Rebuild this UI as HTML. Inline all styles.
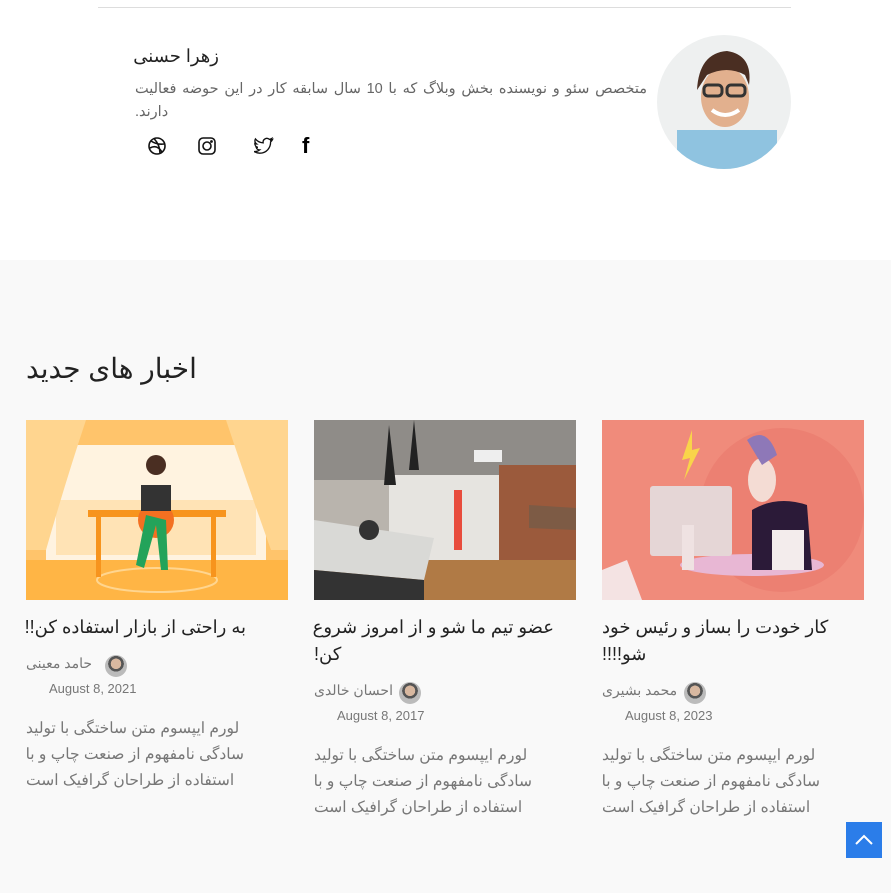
<!DOCTYPE html>
<html><head><meta charset="utf-8"><style>
*{margin:0;padding:0;box-sizing:border-box}
body{width:891px;height:893px;overflow:hidden;background:#fff;font-family:"Liberation Sans","Noto Sans CJK SC",sans-serif;position:relative;color:#222}
.abs{position:absolute}
.r{direction:rtl;white-space:nowrap;text-align:left}
.gray{position:absolute;left:0;top:260px;width:891px;height:633px;background:#f9f9f9}
.t{font-size:18px;color:#222;line-height:27px}
.ex{font-size:15.5px;color:#777;line-height:26px}
.meta{font-size:13px;color:#777}
.nm{font-size:14px;color:#777}
.av{width:22px;height:22px;border-radius:50%;background:radial-gradient(circle at 50% 40%,#d8b8a0 0 30%,#555 31% 45%,#bbb 46%)}
</style></head><body>
<div class="abs" style="left:98px;top:7px;width:693px;height:1px;background:#ddd"></div>
<div class="abs" style="left:657px;top:35px;width:134px;height:134px;border-radius:50%;overflow:hidden;background:#eef0f0">
<svg width="134" height="134"><rect x="20" y="95" width="100" height="50" fill="#8fc3e0"/><ellipse cx="68" cy="62" rx="24" ry="30" fill="#e2b08e"/><path d="M40 55 Q42 18 70 16 Q96 20 92 50 L88 40 Q70 30 50 40Z" fill="#4a2e22"/><rect x="47" y="50" width="18" height="11" rx="4" fill="none" stroke="#333" stroke-width="3"/><rect x="70" y="50" width="18" height="11" rx="4" fill="none" stroke="#333" stroke-width="3"/><path d="M55 75 Q68 85 82 75" stroke="#fff" stroke-width="4" fill="none"/></svg></div>
<div class="abs r" style="left:135px;top:46px;width:84px;font-size:18px;color:#222">زهرا حسنی</div>
<div class="abs r" style="left:135px;top:78px;width:512px;font-size:14.5px;color:#666;line-height:23px;white-space:normal;text-align:justify;text-align-last:left">متخصص سئو و نویسنده بخش وبلاگ که با 10 سال سابقه کار در این حوضه فعالیت دارند.</div>
<svg class="abs" style="left:147px;top:136px" width="20" height="20" viewBox="0 0 20 20" fill="none" stroke="#111" stroke-width="1.6"><circle cx="10" cy="10" r="8"/><path d="M4 5 Q10 9 17 8M3 12 Q10 8 15 16M7 2.5 Q13 9 13 17.5"/></svg>
<svg class="abs" style="left:197px;top:136px" width="20" height="20" viewBox="0 0 20 20" fill="none" stroke="#111" stroke-width="1.6"><rect x="2" y="2" width="16" height="16" rx="4"/><circle cx="10" cy="10" r="4"/><circle cx="14.5" cy="5.5" r=".6" fill="#111"/></svg>
<svg class="abs" style="left:254px;top:137px" width="20" height="18" viewBox="0 0 24 20" fill="none" stroke="#111" stroke-width="1.6"><path d="M22 2.5a9 9 0 0 1-2.6.8A4.5 4.5 0 0 0 21.4 1a9 9 0 0 1-2.9 1.1A4.5 4.5 0 0 0 11 6.2 12.8 12.8 0 0 1 1.7 1.5a4.5 4.5 0 0 0 1.4 6A4.4 4.4 0 0 1 1 7v.1a4.5 4.5 0 0 0 3.6 4.4 4.5 4.5 0 0 1-2 .1 4.5 4.5 0 0 0 4.2 3.1A9 9 0 0 1 0 16.6 12.8 12.8 0 0 0 7 18.6c8.3 0 12.9-6.9 12.9-12.9v-.6A9 9 0 0 0 22 2.5z"/></svg>
<div class="abs" style="left:302px;top:133px;font-size:22px;font-weight:bold;color:#000;font-family:'Liberation Sans'">f</div>
<div class="gray"></div>
<div class="abs r" style="left:26px;top:352px;font-size:28px;color:#222">اخبار های جدید</div>
<svg class="abs" style="left:26px;top:420px" width="262" height="180"><rect width="262" height="180" fill="#ffc46b"/><rect x="20" y="25" width="220" height="120" fill="#fff3e0"/><rect x="30" y="80" width="200" height="55" fill="#ffe3b5"/><path d="M0 0 H60 Q40 60 20 130 H0Z" fill="#ffd58f"/><path d="M262 0 H200 Q220 60 245 130 H262Z" fill="#ffd58f"/><rect y="140" width="262" height="40" fill="#ffb545"/><ellipse cx="131" cy="160" rx="60" ry="12" fill="none" stroke="#ffd58f" stroke-width="2"/><rect x="62" y="90" width="138" height="7" fill="#f7941d"/><rect x="70" y="97" width="5" height="60" fill="#f7941d"/><rect x="185" y="97" width="5" height="60" fill="#f7941d"/><circle cx="130" cy="100" r="18" fill="#f37021"/><rect x="115" y="65" width="30" height="26" fill="#333"/><path d="M120 95 L110 145 L118 148 L130 105 L135 150 L142 150 L140 100Z" fill="#23a35a"/><circle cx="130" cy="45" r="10" fill="#4a2e22"/></svg>
<svg class="abs" style="left:314px;top:420px" width="262" height="180"><rect width="262" height="180" fill="#b9b4ad"/><rect width="262" height="60" fill="#8f8c88"/><rect x="75" y="55" width="115" height="100" fill="#e6e4e0"/><rect x="185" y="45" width="77" height="110" fill="#9b5a3c"/><rect y="140" width="262" height="40" fill="#b07a45"/><path d="M0 100 L120 118 L110 160 L0 150Z" fill="#d9d9d6"/><path d="M0 150 L110 160 L110 180 L0 180Z" fill="#333"/><path d="M215 85 L262 88 V110 L215 108Z" fill="#7d5b45"/><path d="M75 5 L70 65 L82 65Z" fill="#222"/><path d="M100 0 L95 50 L105 50Z" fill="#222"/><rect x="160" y="30" width="28" height="12" fill="#eee"/><circle cx="55" cy="110" r="10" fill="#333"/><rect x="140" y="70" width="8" height="60" fill="#e84c3d"/></svg>
<svg class="abs" style="left:602px;top:420px" width="262" height="180"><rect width="262" height="180" fill="#f08b7b"/><circle cx="180" cy="90" r="82" fill="#ec8072"/><ellipse cx="150" cy="145" rx="72" ry="11" fill="#e8b7d4"/><rect x="48" y="66" width="82" height="70" rx="3" fill="#e5d6d6"/><rect x="80" y="105" width="12" height="45" fill="#efe2e2"/><path d="M150 90 Q175 75 205 85 L210 150 L150 150Z" fill="#2b1a38"/><ellipse cx="160" cy="60" rx="14" ry="22" fill="#f4dcd4"/><path d="M145 20 Q165 5 175 35 L160 45Z" fill="#8e78b8"/><rect x="170" y="110" width="32" height="40" fill="#f3ecec"/><path d="M90 10 L80 40 L88 38 L82 60 L98 28 L90 30Z" fill="#f9d44a"/><path d="M0 150 L25 140 L40 180 L0 180Z" fill="#f4e3e3"/></svg>
<div class="abs r t" style="left:26px;top:614px;width:220px">به راحتی از بازار استفاده کن!!</div>
<div class="abs r nm" style="left:26px;top:655px">حامد معینی</div>
<div class="abs av" style="left:105px;top:655px"></div>
<div class="abs meta" style="left:49px;top:681px">August 8, 2021</div>
<div class="abs r ex" style="left:26px;top:716px;width:218px">لورم ایپسوم متن ساختگی با تولید<br>سادگی نامفهوم از صنعت چاپ و با<br>استفاده از طراحان گرافیک است</div>
<div class="abs r t" style="left:314px;top:614px;width:240px">عضو تیم ما شو و از امروز شروع<br>کن!</div>
<div class="abs r nm" style="left:314px;top:682px">احسان خالدی</div>
<div class="abs av" style="left:399px;top:682px"></div>
<div class="abs meta" style="left:337px;top:708px">August 8, 2017</div>
<div class="abs r ex" style="left:314px;top:743px;width:218px">لورم ایپسوم متن ساختگی با تولید<br>سادگی نامفهوم از صنعت چاپ و با<br>استفاده از طراحان گرافیک است</div>
<div class="abs r t" style="left:602px;top:614px;width:240px">کار خودت را بساز و رئیس خود<br>شو!!!!</div>
<div class="abs r nm" style="left:602px;top:682px">محمد بشیری</div>
<div class="abs av" style="left:684px;top:682px"></div>
<div class="abs meta" style="left:625px;top:708px">August 8, 2023</div>
<div class="abs r ex" style="left:602px;top:743px;width:218px">لورم ایپسوم متن ساختگی با تولید<br>سادگی نامفهوم از صنعت چاپ و با<br>استفاده از طراحان گرافیک است</div>
<div class="abs" style="left:846px;top:822px;width:36px;height:36px;background:#2b7de9">
<svg width="36" height="36"><path d="M10 22 L18 14 L26 22" stroke="#fff" stroke-width="2" fill="none"/></svg></div>
</body></html>
